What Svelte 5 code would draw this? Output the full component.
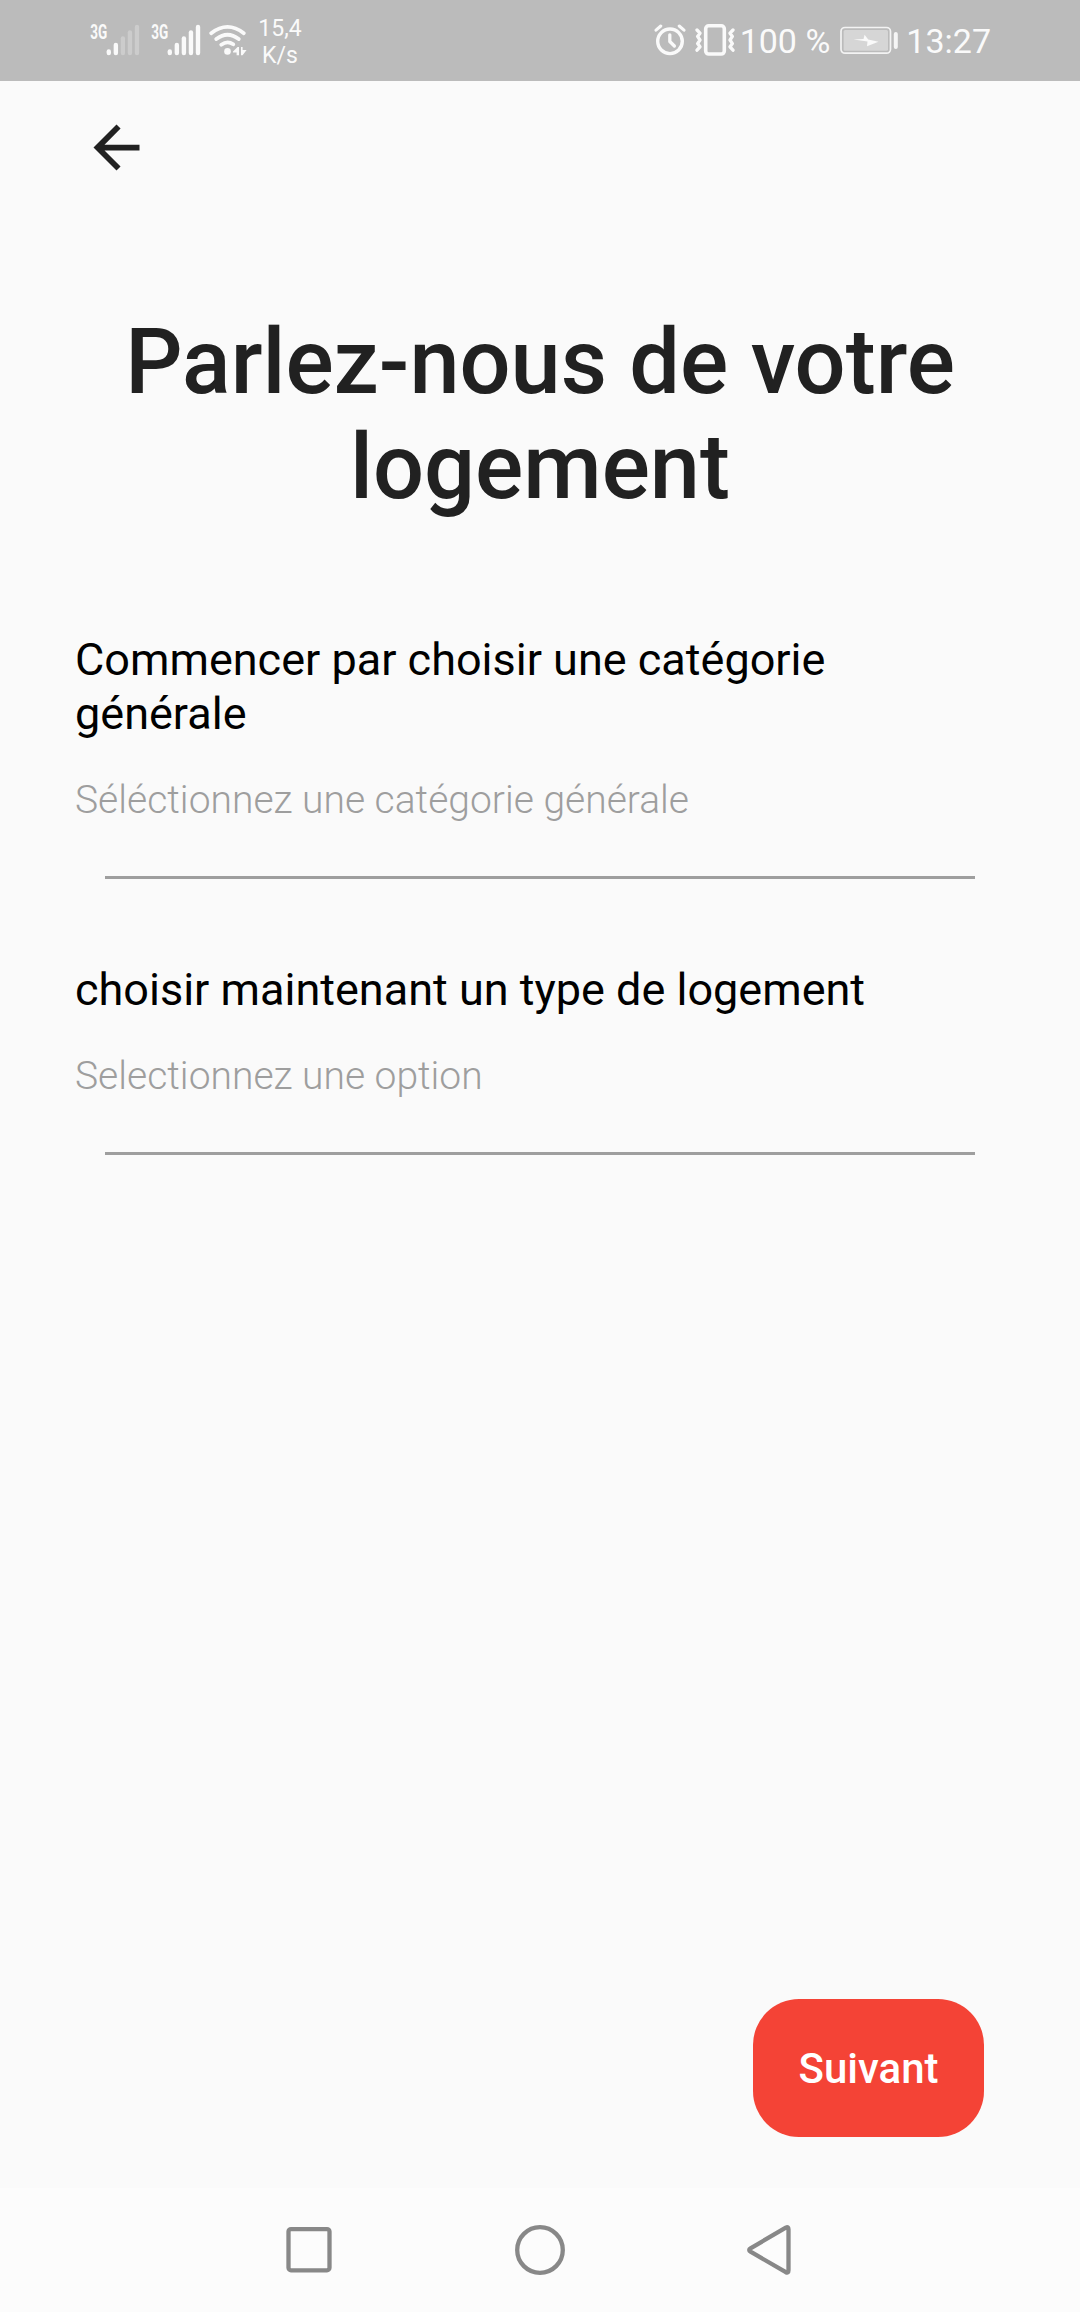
<script>
  const fields = [
    { label: 'Commencer par choisir une catégorie générale', hint: 'Séléctionnez une catégorie générale' },
    { label: 'choisir maintenant un type de logement', hint: 'Selectionnez une option' },
  ];
  // Signal bars: top edge of each of the five bars
  const bars = [49.2, 42.7, 36.3, 30.2, 24.8];
  const sims = [2, 5];
</script>

<div class="screen">
  <header class="status">
    <div class="left">
      {#each sims as active}
        <svg class="sim" width="61" height="81" viewBox="0 0 61 81">
          <text x="0.2" y="38.8" class="net" textLength="17" lengthAdjust="spacingAndGlyphs">3G</text>
          {#each bars as top, i}
            <rect x={16.6 + i * 7.05} y={top} width="4.4" height={55.3 - top} rx="2.2" fill="#fafafa" opacity={i < active ? 1 : 0.27} />
          {/each}
        </svg>
      {/each}
      <svg class="wifi" width="38" height="81" viewBox="0 0 38 81" fill="none" stroke="#fafafa" stroke-width="3.8" stroke-linecap="round">
        <path d="M2.2 33.2Q18.5 20.6 34.8 33.2M7.3 39Q18.5 30.4 29.7 39M12.3 44.7Q18.5 40.2 24.2 44.3" />
        <circle cx="18.5" cy="51.4" r="3.3" fill="#fafafa" stroke="none" />
        <path d="M24 51.6L28.6 47H30V55.3H27.6V52.6H24ZM32 47H33.6V50H37.6L33.6 55.3H32Z" fill="#fafafa" stroke="none" />
      </svg>
      <div class="speed"><span>15,4</span><span>K/s</span></div>
    </div>
    <div class="right">
      <svg class="alarm" width="32" height="81" viewBox="0 0 32 81" fill="none" stroke="#fafafa">
        <circle cx="16" cy="41.3" r="12.3" stroke-width="3.4" />
        <path d="M15.8 34.8V41.5L20.4 46" stroke-width="3.3" stroke-linecap="round" stroke-linejoin="round" />
        <path d="M2 30.2L6.8 26M30 30.2L25.2 26" stroke-width="3" stroke-linecap="round" />
      </svg>
      <svg class="vibrate" width="40" height="81" viewBox="0 0 40 81" fill="none" stroke="#fafafa" stroke-linecap="round" stroke-linejoin="round">
        <rect x="10.7" y="25.8" width="18.6" height="28.2" rx="3" stroke-width="3.6" />
        <path d="M2 30L5 33.2L2.6 36.4L5 40L2.6 43.6L5 46.8L2 50.2M38 30L35 33.2L37.4 36.4L35 40L37.4 43.6L35 46.8L38 50.2" stroke-width="3.3" />
      </svg>
      <span class="percent">100 %</span>
      <svg class="battery" width="60" height="81" viewBox="0 0 60 81">
        <rect x="1" y="27.5" width="49.5" height="25.7" rx="4" fill="none" stroke="#f3f3f3" stroke-width="1.7" />
        <rect x="3.6" y="30" width="44.4" height="20.7" rx="1.5" fill="#d6d6d6" />
        <path d="M13.5 39.5L27.5 41.6L27 46.3L38.5 41.7L28.2 39.5L24.6 34.7L23.5 39Z" fill="#fafafa" />
        <rect x="53.8" y="32" width="4" height="17" rx="2" fill="#f5f5f5" />
      </svg>
      <span class="time">13:27</span>
    </div>
  </header>

  <main>
    <button class="back" aria-label="Retour">
      <svg width="69" height="69" viewBox="0 0 24 24" fill="#212121"><path d="M20 11H7.83l5.59-5.59L12 4l-8 8 8 8 1.41-1.41L7.83 13H20v-2z" /></svg>
    </button>
    <h1>Parlez-nous de votre logement</h1>
    <form>
      {#each fields as field}
        <div class="field">
          <div class="label">{field.label}</div>
          <div class="hint">{field.hint}</div>
          <div class="line"></div>
        </div>
      {/each}
    </form>
    <button class="next">Suivant</button>
  </main>

  <nav>
    <svg width="56" height="56" viewBox="0 0 56 56"><rect x="7.5" y="7.1" width="41" height="41.2" rx="2.5" /></svg>
    <svg width="56" height="56" viewBox="0 0 56 56"><circle cx="28" cy="28" r="22.8" /></svg>
    <svg width="56" height="56" viewBox="0 0 56 56"><path d="M7.5 26.3L42.8 5.6Q45.5 4.4 45.5 7.3V48.3Q45.5 51.4 42.8 50.2L7.5 29.7Q4.9 28 7.5 26.3Z" /></svg>
  </nav>
</div>

<style>
  :global(body) { margin: 0; background: #fafafa; }
  .screen {
    width: 1080px;
    height: 2312px;
    display: flex;
    flex-direction: column;
    background: #fafafa;
    font-family: Roboto, sans-serif;
    overflow: hidden;
  }
  svg { display: block; flex: none; }
  .status {
    height: 81px;
    flex: none;
    box-sizing: border-box;
    padding: 0 89px 0 90px;
    display: flex;
    justify-content: space-between;
    background: #bbbbbb;
    color: #fafafa;
  }
  .left, .right { display: flex; align-items: center; white-space: nowrap; }
  .net { font: 700 19.5px Roboto, sans-serif; fill: #fafafa; }
  .wifi { margin-left: -3px; }
  .speed {
    width: 46px;
    margin-left: 10px;
    padding-top: 3px;
    display: flex;
    flex-direction: column;
    align-items: center;
    font-size: 23px;
    line-height: 27px;
  }
  .vibrate { margin-left: 9px; }
  .percent { margin-left: 5px; font-size: 34px; }
  .battery { margin-left: 10px; }
  .time { margin-left: 6px; font-size: 34px; }
  main { flex: 1; display: flex; flex-direction: column; }
  button { border: 0; padding: 0; font-family: inherit; }
  .back { margin: 32px 0 0 82px; width: 69px; height: 69px; background: none; }
  h1 {
    margin: 128px 75px 0;
    font-size: 90px;
    line-height: 105px;
    font-weight: 500;
    text-align: center;
    color: #212121;
  }
  form { margin: 113px 75px 0; display: flex; flex-direction: column; gap: 84px; }
  .label { font-size: 45px; line-height: 54px; color: #000; }
  .hint { margin-top: 35px; font-size: 39px; line-height: 48px; font-weight: 300; color: #9e9e9e; }
  .line { margin: 52px 30px 0; height: 3px; background: #9e9e9e; }
  .next {
    margin: auto 96px 51px auto;
    width: 231px;
    height: 138px;
    border-radius: 46px;
    background: #f44336;
    color: #fff;
    font-size: 42px;
    font-weight: 500;
  }
  nav {
    height: 124px;
    flex: none;
    display: flex;
    justify-content: center;
    align-items: center;
    gap: 175px;
    background: #fcfcfc;
  }
  nav svg { fill: none; stroke: #888; stroke-width: 4.3; stroke-linejoin: round; }
</style>
